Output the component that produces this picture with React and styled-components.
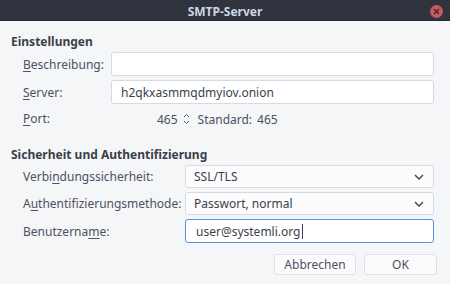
import React from 'react';
import styled, { createGlobalStyle } from 'styled-components';

const GlobalStyle = createGlobalStyle`
  html, body {
    margin: 0;
    padding: 0;
    background: #f5f6f7;
  }
  body {
    font-family: "Noto Sans", "Open Sans", sans-serif;
    font-size: 12px;
    color: #4b5162;
  }
`;

const Window = styled.div`
  width: 450px;
  height: 284px;
  display: flex;
  flex-direction: column;
  background: #f5f6f7;
  overflow: hidden;
`;

const TitleBar = styled.div`
  height: 20px;
  flex: none;
  background: #2f343f;
  border-bottom: 1px solid #262a33;
  display: flex;
  align-items: center;
  justify-content: center;
  position: relative;
`;

const Title = styled.span`
  color: #cfd6e6;
  font-weight: bold;
  font-size: 12px;
  margin-top: 2px;
`;

const CloseButton = styled.div`
  position: absolute;
  right: 7px;
  top: 5px;
  width: 13px;
  height: 13px;
  border-radius: 50%;
  background: #cc575d;
  display: flex;
  align-items: center;
  justify-content: center;
`;

const Body = styled.div`
  flex: 1;
  padding: 11px 16px 0 11px;
  display: flex;
  flex-direction: column;
`;

const SectionTitle = styled.div`
  font-weight: bold;
  color: #3a3f4b;
  height: 20px;
  line-height: 20px;
`;

const Grid = styled.div`
  display: grid;
  grid-template-columns: ${p => p.$labelWidth}px 1fr;
  row-gap: 4px;
  padding-left: 12px;
  align-items: center;
`;

const Label = styled.label`
  color: #4b5162;
  white-space: nowrap;
`;

const Key = styled.span`
  text-decoration: underline;
  text-underline-offset: 2px;
`;

const Field = styled.div`
  height: ${p => p.$h}px;
  box-sizing: border-box;
  border: 1px solid ${p => (p.$focus ? '#5294e2' : '#d5dae4')};
  border-radius: 3px;
  background: ${p => (p.$select ? '#fcfcfc' : '#ffffff')};
  display: flex;
  align-items: center;
  padding: 0 9px 0 ${p => p.$pad}px;
  color: #3a3f4b;
`;

const Caret = styled.span`
  display: inline-block;
  width: 1px;
  height: 15px;
  background: #3a3f4b;
  margin-left: 1px;
`;

const Chevron = styled.svg`
  margin-left: auto;
`;

const PortRow = styled.div`
  height: 20px;
  display: flex;
  align-items: center;
  padding-left: 46px;
  margin-top: 1px;
`;

const Spinner = styled.svg`
  margin: 0 8px 0 5px;
`;

const DefaultValue = styled.span`
  margin-left: 5px;
`;

const Footer = styled.div`
  display: flex;
  justify-content: flex-end;
  gap: 8px;
  margin-top: 11px;
  margin-right: -3px;
`;

const Button = styled.button`
  width: ${p => p.$w}px;
  height: 21px;
  box-sizing: border-box;
  border: 1px solid #dde1e9;
  border-radius: 3px;
  background: #fbfbfc;
  font-family: inherit;
  font-size: 12px;
  color: #4b5162;
  padding: 0;
`;

const ChevronIcon = () => (
  <Chevron width="10" height="6" viewBox="0 0 10 6">
    <path d="M1 1 L5 5 L9 1" fill="none" stroke="#4b5162" strokeWidth="1.6" />
  </Chevron>
);

export default function App() {
  return (
    <>
      <GlobalStyle />
      <Window>
        <TitleBar>
          <Title>SMTP-Server</Title>
          <CloseButton>
            <svg width="7" height="7" viewBox="0 0 7 7">
              <path d="M1 1 L6 6 M6 1 L1 6" stroke="#2f343f" strokeWidth="1.6" />
            </svg>
          </CloseButton>
        </TitleBar>
        <Body>
          <SectionTitle>Einstellungen</SectionTitle>
          <Grid $labelWidth={88}>
            <Label><Key>B</Key>eschreibung:</Label>
            <Field $h={24} $pad={9} />
            <Label><Key>S</Key>erver:</Label>
            <Field $h={24} $pad={9}>h2qkxasmmqdmyiov.onion</Field>
            <Label><Key>P</Key>ort:</Label>
            <PortRow>
              465
              <Spinner width="7" height="12" viewBox="0 0 7 12">
                <path d="M1 4 L3.5 1.5 L6 4 M1 8 L3.5 10.5 L6 8" fill="none" stroke="#4b5162" strokeWidth="1" />
              </Spinner>
              Standard:
              <DefaultValue>465</DefaultValue>
            </PortRow>
          </Grid>
          <SectionTitle style={{ marginTop: 16 }}>Sicherheit und Authentifizierung</SectionTitle>
          <Grid $labelWidth={162}>
            <Label>Verbi<Key>n</Key>dungssicherheit:</Label>
            <Field $h={23} $pad={8} $select>SSL/TLS<ChevronIcon /></Field>
            <Label>A<Key>u</Key>thentifizierungsmethode:</Label>
            <Field $h={23} $pad={8} $select>Passwort, normal<ChevronIcon /></Field>
            <Label>Benutzerna<Key>m</Key>e:</Label>
            <Field $h={24} $pad={10} $focus>user@systemli.org<Caret /></Field>
          </Grid>
          <Footer>
            <Button $w={82}>Abbrechen</Button>
            <Button $w={73}>OK</Button>
          </Footer>
        </Body>
      </Window>
    </>
  );
}
